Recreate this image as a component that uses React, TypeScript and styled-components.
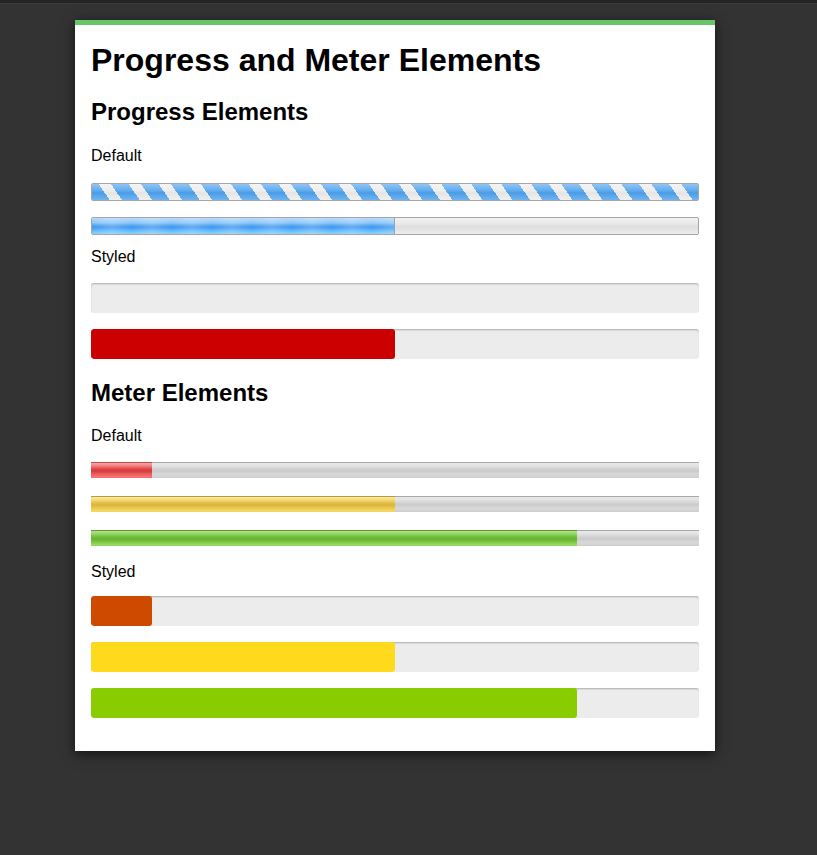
import React from "react";
import styled, { createGlobalStyle } from "styled-components";

const Global = createGlobalStyle`
  html, body {
    margin: 0;
    padding: 0;
    background: #333333;
    min-height: 100vh;
  }
  body {
    font-family: "Liberation Sans", Arial, Helvetica, sans-serif;
    color: #000;
  }
`;

const TopStrip = styled.div`
  height: 3px;
  background: #242424;
  border-bottom: 1px solid #3a3a3a;
`;

const Card = styled.main`
  box-sizing: border-box;
  width: 640px;
  margin: 16px 0 0 75px;
  background: #ffffff;
  border-top: 5px solid #67c66a;
  padding: 17px 16px 33px;
  box-shadow: 0 3px 12px rgba(0, 0, 0, 0.65);
  display: flex;
  flex-direction: column;
`;

const Title = styled.h1`
  margin: 0;
  font-size: 32px;
  line-height: 36px;
  font-weight: bold;
`;

const SectionTitle = styled.h2<{ $mt: number }>`
  margin: ${(p) => p.$mt}px 0 0;
  font-size: 24px;
  line-height: 28px;
  font-weight: bold;
`;

const Label = styled.p<{ $mt: number }>`
  margin: ${(p) => p.$mt}px 0 0;
  font-size: 16px;
  line-height: 20px;
`;

const Stack = styled.div<{ $mt: number; $gap: number }>`
  margin-top: ${(p) => p.$mt}px;
  display: flex;
  flex-direction: column;
  gap: ${(p) => p.$gap}px;
`;

/* ---------- Default (Aqua-like) progress ---------- */
const AquaTrack = styled.div`
  box-sizing: border-box;
  height: 18px;
  border: 1px solid #a6a6a6;
  border-radius: 2px;
  overflow: hidden;
  background: linear-gradient(
    to bottom,
    #f2f2f2 0%,
    #e9e9e9 35%,
    #dedede 55%,
    #e6e6e6 80%,
    #eeeeee 100%
  );
`;

const AquaStripes = styled.div`
  height: 100%;
  background-image:
    linear-gradient(
      to bottom,
      rgba(255, 255, 255, 0.38) 0%,
      rgba(255, 255, 255, 0.12) 40%,
      rgba(0, 0, 0, 0.03) 55%,
      rgba(255, 255, 255, 0.2) 100%
    ),
    repeating-linear-gradient(
      55deg,
      #4da1ee 0px,
      #4da1ee 14.5px,
      #ececec 14.5px,
      #ececec 24.6px
    );
`;

const AquaFill = styled.div<{ $value: number }>`
  height: 100%;
  width: ${(p) => p.$value}%;
  border-right: 1px solid #8fa6bd;
  box-sizing: border-box;
  background:
    repeating-linear-gradient(
      to right,
      rgba(255, 255, 255, 0) 0px,
      rgba(255, 255, 255, 0.18) 20px,
      rgba(255, 255, 255, 0) 40px
    ),
    linear-gradient(
      to bottom,
      #b3dafb 0%,
      #8cc6f7 30%,
      #4a9eee 50%,
      #3f9bf0 60%,
      #6ec0fb 85%,
      #8fd0fc 100%
    );
`;

/* ---------- Styled progress / meter ---------- */
const FlatTrack = styled.div`
  height: 30px;
  border-radius: 3px;
  background: #ececec;
  box-shadow: inset 0 2px 2px -1px rgba(0, 0, 0, 0.28),
    inset 1px 0 1px -1px rgba(0, 0, 0, 0.2);
  overflow: hidden;
`;

const FlatFill = styled.div<{ $value: number; $color: string }>`
  height: 100%;
  width: ${(p) => p.$value}%;
  background: ${(p) => p.$color};
  border-radius: 3px;
`;

/* ---------- Default meter ---------- */
const MeterTrack = styled.div`
  height: 16px;
  background: linear-gradient(
    to bottom,
    #a9a9a9 0px,
    #a9a9a9 1px,
    #e8e8e8 1px,
    #e2e2e2 4px,
    #d2d2d2 7px,
    #cbcbcb 9px,
    #d8d8d8 12px,
    #d3d3d3 15px,
    #c9c9c9 16px
  );
`;

const meterGradients: Record<string, string> = {
  red: `linear-gradient(to bottom, #c64848 0px, #c64848 1px, #f7a5a5 1px, #f08080 4px, #de4646 7px, #d63a3a 9px, #ea5d5d 12px, #fb7272 15px, #f47070 16px)`,
  yellow: `linear-gradient(to bottom, #b69e2c 0px, #b69e2c 1px, #fbeaa2 1px, #f3d978 4px, #e2bf46 7px, #dab538 9px, #e9c850 12px, #f5d964 15px, #edd460 16px)`,
  green: `linear-gradient(to bottom, #5c9b2c 0px, #5c9b2c 1px, #b4e290 1px, #92d468 4px, #6fbe3a 7px, #64b430 9px, #7cc644 12px, #98dc68 15px, #8fd460 16px)`,
};

const MeterFill = styled.div<{ $value: number; $tone: string }>`
  height: 100%;
  width: ${(p) => p.$value}%;
  background: ${(p) => meterGradients[p.$tone]};
`;

const styledMeters = [
  { value: 10, color: "#ce4a00" },
  { value: 50, color: "#ffd91b" },
  { value: 80, color: "#89cd00" },
];

const defaultMeters = [
  { value: 10, tone: "red" },
  { value: 50, tone: "yellow" },
  { value: 80, tone: "green" },
];

export default function App() {
  return (
    <>
      <Global />
      <TopStrip />
      <Card>
        <Title>Progress and Meter Elements</Title>

        <SectionTitle $mt={20}>Progress Elements</SectionTitle>
        <Label $mt={20}>Default</Label>
        <Stack $mt={17} $gap={16}>
          <AquaTrack role="progressbar">
            <AquaStripes />
          </AquaTrack>
          <AquaTrack role="progressbar" aria-valuenow={50}>
            <AquaFill $value={50} />
          </AquaTrack>
        </Stack>
        <Label $mt={12}>Styled</Label>
        <Stack $mt={16} $gap={16}>
          <FlatTrack role="progressbar" />
          <FlatTrack role="progressbar" aria-valuenow={50}>
            <FlatFill $value={50} $color="#cc0000" />
          </FlatTrack>
        </Stack>

        <SectionTitle $mt={20}>Meter Elements</SectionTitle>
        <Label $mt={19}>Default</Label>
        <Stack $mt={16} $gap={18}>
          {defaultMeters.map((m) => (
            <MeterTrack key={m.tone} role="meter" aria-valuenow={m.value}>
              <MeterFill $value={m.value} $tone={m.tone} />
            </MeterTrack>
          ))}
        </Stack>
        <Label $mt={16}>Styled</Label>
        <Stack $mt={14} $gap={16}>
          {styledMeters.map((m) => (
            <FlatTrack key={m.color} role="meter" aria-valuenow={m.value}>
              <FlatFill $value={m.value} $color={m.color} />
            </FlatTrack>
          ))}
        </Stack>
      </Card>
    </>
  );
}
